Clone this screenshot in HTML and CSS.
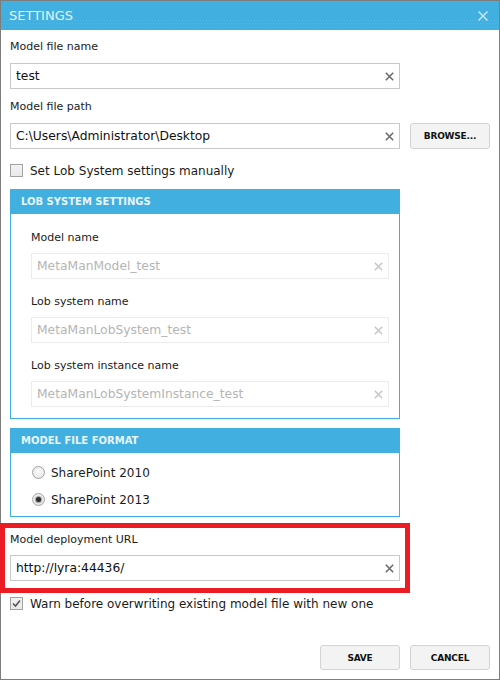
FILE: index.html
```html
<!DOCTYPE html>
<html lang="en">
<head>
  <meta charset="UTF-8">
  <title>Settings</title>
  <link rel="stylesheet" href="styles.css">
</head>
<body>
  <div class="window">
    <div class="titlebar">
      <span class="title">SETTINGS</span>
      <svg class="close" width="10" height="10" viewBox="0 0 10 10">
        <path d="M0.5 0.5 L9.5 9.5 M9.5 0.5 L0.5 9.5" />
      </svg>
    </div>

    <div class="content">
      <div class="field first">
        <div class="label">Model file name</div>
        <div class="input">
          <span class="value">test</span>
          <svg class="clear" width="9" height="9" viewBox="0 0 9 9"><path d="M0.8 0.8 L8.2 8.2 M8.2 0.8 L0.8 8.2" /></svg>
        </div>
      </div>

      <div class="field">
        <div class="label">Model file path</div>
        <div class="path-row">
          <div class="input">
            <span class="value">C:\Users\Administrator\Desktop</span>
            <svg class="clear" width="9" height="9" viewBox="0 0 9 9"><path d="M0.8 0.8 L8.2 8.2 M8.2 0.8 L0.8 8.2" /></svg>
          </div>
          <button class="btn browse">BROWSE...</button>
        </div>
      </div>

      <div class="check manual">
        <span class="box"></span>
        <span>Set Lob System settings manually</span>
      </div>

      <div class="panel lob">
        <div class="panel-head">LOB SYSTEM SETTINGS</div>
        <div class="panel-body">
          <div class="sub-field">
            <div class="label">Model name</div>
            <div class="input disabled">
              <span class="value">MetaManModel_test</span>
              <svg class="clear" width="9" height="9" viewBox="0 0 9 9"><path d="M0.8 0.8 L8.2 8.2 M8.2 0.8 L0.8 8.2" /></svg>
            </div>
          </div>
          <div class="sub-field">
            <div class="label">Lob system name</div>
            <div class="input disabled">
              <span class="value">MetaManLobSystem_test</span>
              <svg class="clear" width="9" height="9" viewBox="0 0 9 9"><path d="M0.8 0.8 L8.2 8.2 M8.2 0.8 L0.8 8.2" /></svg>
            </div>
          </div>
          <div class="sub-field">
            <div class="label">Lob system instance name</div>
            <div class="input disabled">
              <span class="value">MetaManLobSystemInstance_test</span>
              <svg class="clear" width="9" height="9" viewBox="0 0 9 9"><path d="M0.8 0.8 L8.2 8.2 M8.2 0.8 L0.8 8.2" /></svg>
            </div>
          </div>
        </div>
      </div>

      <div class="panel format">
        <div class="panel-head">MODEL FILE FORMAT</div>
        <div class="panel-body">
          <div class="radio">
            <span class="dot"></span>
            <span>SharePoint 2010</span>
          </div>
          <div class="radio checked">
            <span class="dot"></span>
            <span>SharePoint 2013</span>
          </div>
        </div>
      </div>

      <div class="field deploy">
        <div class="label">Model deployment URL</div>
        <div class="input">
          <span class="value">http://lyra:44436/</span>
          <svg class="clear" width="9" height="9" viewBox="0 0 9 9"><path d="M0.8 0.8 L8.2 8.2 M8.2 0.8 L0.8 8.2" /></svg>
        </div>
      </div>

      <div class="check warn checked">
        <span class="box">
          <svg width="11" height="11" viewBox="0 0 11 11"><path d="M2 5.5 L4.5 8 L9 2.5" /></svg>
        </span>
        <span>Warn before overwriting existing model file with new one</span>
      </div>
    </div>

    <div class="footer">
      <button class="btn">SAVE</button>
      <button class="btn">CANCEL</button>
    </div>
  </div>

  <div class="highlight"></div>
</body>
</html>
```

FILE: styles.css
```css
body {
  margin: 0;
  font-family: "DejaVu Sans", Verdana, sans-serif;
  color: #1b1b1b;
  background: #fff;
}

.window {
  width: 500px;
  height: 680px;
  box-sizing: border-box;
  border: 1px solid #7d7d7d;
  display: flex;
  flex-direction: column;
  background: #fff;
}

.titlebar {
  height: 29px;
  flex-shrink: 0;
  display: flex;
  align-items: center;
  justify-content: space-between;
  padding: 0 11px 0 8px;
  background-color: #41b0e0;
  background-image:
    radial-gradient(circle, #55b9e4 0.6px, transparent 1px),
    radial-gradient(circle, #55b9e4 0.6px, transparent 1px),
    radial-gradient(circle, #52b7e3 0.6px, transparent 1px);
  background-size: 3px 3px, 3px 3px, 3px 3px;
  background-position: 0 18px, 1px 21px, 0 25px;
  background-repeat: repeat-x;
}

.title {
  font-size: 13px;
  line-height: 29px;
  color: #e2f3fb;
}

.close path {
  stroke: #c6e7f6;
  stroke-width: 1.5;
  fill: none;
}

.content {
  padding: 10px 9px 0 9px;
}

.label {
  font-size: 11px;
  line-height: 13px;
  height: 13px;
  white-space: nowrap;
}

.field .label {
  margin-bottom: 10px;
}

.field {
  margin-bottom: 11px;
}

.input {
  width: 390px;
  height: 26px;
  box-sizing: border-box;
  border: 1px solid #c9c9c9;
  background: #fff;
  display: flex;
  align-items: center;
  justify-content: space-between;
  padding: 0 5px 0 5px;
  font-size: 12.3px;
  line-height: 24px;
  color: #111;
}

.clear path {
  stroke: #6c6c6c;
  stroke-width: 1.6;
  fill: none;
}

.input.disabled {
  width: 358px;
  border-color: #ececec;
  color: #b5b5b5;
}

.input.disabled .clear path {
  stroke: #c8c8c8;
}

.path-row {
  display: flex;
  gap: 10px;
}

.btn {
  width: 80px;
  height: 25px;
  box-sizing: border-box;
  border: 1px solid #d3d3d3;
  border-radius: 3px;
  background: #f3f3f3;
  font-family: "DejaVu Sans", Verdana, sans-serif;
  font-weight: bold;
  font-size: 9px;
  letter-spacing: -0.2px;
  color: #111;
  padding: 0;
}

.browse {
  height: 26px;
}

.check, .radio {
  display: flex;
  align-items: flex-start;
  font-size: 12px;
  line-height: 14px;
  white-space: nowrap;
}

.check {
  gap: 7px;
}

.check .box {
  width: 13px;
  height: 13px;
  box-sizing: border-box;
  border: 1px solid #a2a2a2;
  background: linear-gradient(#f2f2f2, #e9e9e9);
  display: flex;
  align-items: center;
  justify-content: center;
}

.check .box path {
  stroke: #555;
  stroke-width: 1.6;
  fill: none;
}

.manual {
  margin-top: 15px;
}

.panel {
  width: 390px;
  box-sizing: border-box;
  border: 1px solid #41b0e0;
}

.panel-head {
  height: 24px;
  line-height: 24px;
  padding-left: 10px;
  background: #41b0e0;
  color: #e8f5fc;
  font-size: 10px;
  font-weight: bold;
}

.lob {
  margin-top: 11px;
}

.lob .panel-body {
  padding: 17px 0 11px 20px;
}

.sub-field .label {
  margin-bottom: 9px;
}

.sub-field + .sub-field {
  margin-top: 16px;
}

.format {
  margin-top: 9px;
}

.format .panel-body {
  padding: 13px 0 9px 21px;
}

.radio {
  gap: 6px;
}

.radio + .radio {
  margin-top: 13px;
}

.radio .dot {
  width: 13px;
  height: 13px;
  box-sizing: border-box;
  border: 1px solid #a4a4a4;
  border-radius: 50%;
  background: radial-gradient(circle at 50% 40%, #fbfbfb, #e2e2e2);
  display: flex;
  align-items: center;
  justify-content: center;
}

.radio.checked .dot::after {
  content: "";
  width: 5px;
  height: 5px;
  border-radius: 50%;
  background: #2e2e2e;
  box-shadow: 0 0 1px 1px #9a9a9a;
}

.deploy {
  margin-top: 16px;
  margin-bottom: 0;
}

.deploy .label {
  margin-bottom: 9px;
}

.warn {
  margin-top: 16px;
}

.footer {
  margin-top: auto;
  display: flex;
  justify-content: flex-end;
  gap: 10px;
  padding: 0 9px 9px 0;
}

.highlight {
  position: absolute;
  left: 0;
  top: 523px;
  width: 410px;
  height: 70px;
  box-sizing: border-box;
  border: 5px solid #ec1c24;
}
```
